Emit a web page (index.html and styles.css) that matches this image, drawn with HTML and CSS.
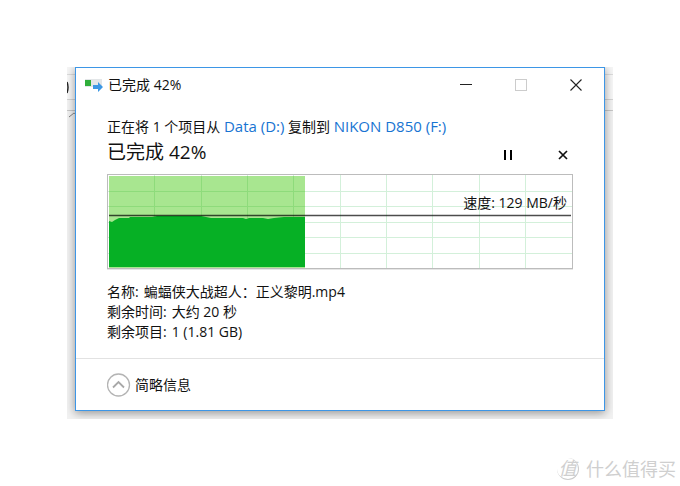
FILE: index.html
```
<!DOCTYPE html>
<html lang="zh-CN">
<head>
    <meta charset="UTF-8">
    <meta name="viewport" content="width=device-width, initial-scale=1.0">
    <title>已完成 42%</title>
    <link rel="stylesheet" href="styles.css">
</head>
<body>
    <main class="desktop">
        <svg class="behind" width="8" height="60" viewBox="0 0 8 60" fill="none">
            <path d="M0 15q2 5 0 11" stroke="#222" stroke-width="1.5"/>
            <path d="M2 50l5-4 5 4" stroke="#777"/>
        </svg>
        <section class="dialog">
            <header class="titlebar">
                <svg class="app-icon" width="18" height="14" viewBox="0 0 18 14">
                    <rect x="0" y="1" width="17" height="8" fill="#e3e6e8"/>
                    <rect x="0" y="2" width="6" height="6" fill="#2fae3a"/>
                    <path d="M8 7h5V4l5 5-5 5v-3H8z" fill="#3c97e4"/>
                </svg>
                <h1 class="title">已完成 42%</h1>
                <div class="window-buttons">
                    <button type="button" aria-label="最小化">
                        <svg width="12" height="12" viewBox="0 0 12 12"><path d="M0 5.5h12" stroke="#222"/></svg>
                    </button>
                    <button type="button" aria-label="最大化" disabled>
                        <svg width="12" height="12" viewBox="0 0 12 12"><rect x=".5" y=".5" width="11" height="11" fill="none" stroke="#ccc"/></svg>
                    </button>
                    <button type="button" aria-label="关闭">
                        <svg width="12" height="12" viewBox="0 0 12 12"><path d="M.5 .5l11 11M11.5 .5l-11 11" stroke="#222" stroke-width="1.1"/></svg>
                    </button>
                </div>
            </header>

            <div class="content">
                <p class="route">正在将 1 个项目从 <a href="#">Data (D:)</a> 复制到 <a href="#">NIKON D850 (F:)</a></p>
                <div class="status">
                    <h2>已完成 42%</h2>
                    <div class="actions">
                        <button type="button" aria-label="暂停">
                            <svg width="10" height="10" viewBox="0 0 10 10"><path d="M2 0v10M8 0v10" stroke="#000" stroke-width="2"/></svg>
                        </button>
                        <button type="button" aria-label="取消">
                            <svg width="10" height="10" viewBox="0 0 10 10"><path d="M1 1l8 8M9 1l-8 8" stroke="#111" stroke-width="1.7"/></svg>
                        </button>
                    </div>
                </div>

                <div class="chart">
                    <svg viewBox="0 0 464 93" preserveAspectRatio="none" role="img" aria-label="传输速度">
                        <path d="M46.5 0v93M93.5 0v93M139.5 0v93M185.5 0v93M232.5 0v93M278.5 0v93M324.5 0v93M371.5 0v93M417.5 0v93M0 16.5h464M0 31.5h464M0 47.5h464M0 62.5h464M0 78.5h464" stroke="#d3f0da" fill="none"/>
                        <rect x="1" y="1" width="196" height="92" fill="#a8e690"/>
                        <path d="M46.5 1v42M93.5 1v42M139.5 1v42M185.5 1v42M1 16.5h196M1 31.5h196" stroke="#8edb7b" fill="none"/>
                        <path d="M1 92V46l3 1 3-2 4-2h10l1-1h22l5-1h44l10 2h32l3 1 3-1h14l5 1 6-1 10-1h21v50z" fill="#06b025"/>
                        <path d="M1 40.500h462" stroke="#000" stroke-opacity=".7" stroke-width="1.4"/>
                    </svg>
                    <span class="speed">速度: 129 MB/秒</span>
                </div>

                <dl class="details">
                    <div><dt>名称:</dt><dd>蝙蝠侠大战超人：正义黎明.mp4</dd></div>
                    <div><dt>剩余时间:</dt><dd>大约 20 秒</dd></div>
                    <div><dt>剩余项目:</dt><dd>1 (1.81 GB)</dd></div>
                </dl>
            </div>

            <footer class="footer">
                <button type="button" class="toggle">
                    <svg width="24" height="24" viewBox="0 0 24 24" fill="none">
                        <circle cx="11.500" cy="12" r="11" stroke="#b4b4b4" stroke-width="1.3"/>
                        <path d="M6 14.500L11.500 9l5.500 5.500" stroke="#a8a8a8" stroke-width="1.8"/>
                    </svg>
                    简略信息
                </button>
            </footer>
        </section>
    </main>

    <div class="watermark">
        <span class="badge">值</span>
        <span>什么值得买</span>
    </div>
</body>
</html>
```
FILE: styles.css
```
* {
    box-sizing: border-box;
}
body {
    display: flex;
    flex-direction: column;
    min-height: 100vh;
    margin: 0;
    padding: 67px 67px 0;
    background-color: #fff;
    color: #111;
    font-family: "Open Sans", "Noto Sans CJK SC", sans-serif;
    font-size: 14px;
    line-height: 20px;
}
h1, h2, p, dl, dd {
    margin: 0;
    font-weight: normal;
}
svg {
    display: block;
}
button {
    padding: 0;
    border: none;
    background: none;
    color: inherit;
    font: inherit;
}
a {
    color: #1874d2;
    font-size: 15px;
    text-decoration: none;
}

/* Strip of the window behind, cut off around the dialog */
.desktop {
    position: relative;
    padding: 0 8px 8px;
    overflow: hidden;
    background: linear-gradient(#f6f6f6 7px, #ddd 7px 8px, #f8f8f8 8px 32px, #d5d5d5 32px 33px, #f4f4f4 33px 43px, #c8c8c8 43px 44px, #f2f2f2 44px);
}
.behind {
    position: absolute;
    top: 0;
    left: 0;
}
.dialog {
    border: 1px solid #3d96e6;
    background-color: #fff;
    box-shadow: 0 2px 9px rgba(0, 0, 0, 0.4);
}

.titlebar {
    display: flex;
    align-items: center;
    gap: 5px;
    height: 34px;
    padding: 0 1px 0 9px;
}
.title {
    flex: 1;
    font-size: 14px;
}
.window-buttons {
    display: flex;
}
.window-buttons button {
    display: grid;
    place-items: center;
    width: 55px;
    height: 34px;
}

.content {
    padding: 14px 31px 16px;
}
.status {
    display: flex;
    align-items: center;
    justify-content: space-between;
    height: 30px;
}
.status h2 {
    font-size: 19px;
    line-height: 30px;
}
.actions {
    display: flex;
    gap: 35px;
    padding: 6px 0 0;
}
.actions button {
    display: grid;
    place-items: center;
    width: 20px;
    height: 20px;
}

.chart {
    position: relative;
    margin-top: 7px;
    border: 1px solid #bcbcbc;
    box-shadow: 0 1px 0 #e6e6e6;
}
.chart svg {
    width: 100%;
    height: 93px;
}
.speed {
    position: absolute;
    top: 18px;
    right: 5px;
}

.details {
    padding-top: 13px;
}
.details div {
    display: flex;
    gap: 5px;
}

.footer {
    padding: 14px 31px 13px;
    border-top: 1px solid #e2e2e2;
}
.toggle {
    display: flex;
    align-items: center;
    gap: 4px;
}

.watermark {
    display: flex;
    align-items: center;
    align-self: flex-end;
    gap: 7px;
    margin: auto -63px 4px 0;
    color: #cfcfcf;
    font-size: 18px;
    line-height: 26px;
}
.badge {
    width: 22px;
    height: 22px;
    border-right: 1px solid #ccc;
    border-bottom: 1px solid #ccc;
    border-radius: 50%;
    font-size: 18px;
    font-style: italic;
    line-height: 20px;
    text-align: center;
}
```
